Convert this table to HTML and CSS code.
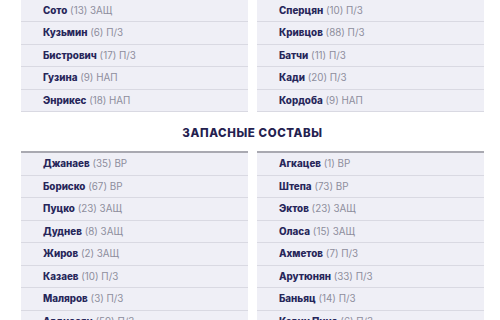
FILE: index.html
```html
<!DOCTYPE html>
<html lang="ru">
<head>
<meta charset="utf-8">
<link rel="stylesheet" href="styles.css">
</head>
<body>
<div class="page">
  <div class="lists lists-main">
    <ul class="list">
      <li class="row"><b class="name">Сото</b> <span class="meta">(13) ЗАЩ</span></li>
      <li class="row"><b class="name">Кузьмин</b> <span class="meta">(6) П/З</span></li>
      <li class="row"><b class="name">Бистрович</b> <span class="meta">(17) П/З</span></li>
      <li class="row"><b class="name">Гузина</b> <span class="meta">(9) НАП</span></li>
      <li class="row"><b class="name">Энрикес</b> <span class="meta">(18) НАП</span></li>
    </ul>
    <ul class="list">
      <li class="row"><b class="name">Сперцян</b> <span class="meta">(10) П/З</span></li>
      <li class="row"><b class="name">Кривцов</b> <span class="meta">(88) П/З</span></li>
      <li class="row"><b class="name">Батчи</b> <span class="meta">(11) П/З</span></li>
      <li class="row"><b class="name">Кади</b> <span class="meta">(20) П/З</span></li>
      <li class="row"><b class="name">Кордоба</b> <span class="meta">(9) НАП</span></li>
    </ul>
  </div>
  <h2 class="section-title">Запасные составы</h2>
  <div class="lists lists-subs">
    <ul class="list list-subs">
      <li class="row"><b class="name">Джанаев</b> <span class="meta">(35) ВР</span></li>
      <li class="row"><b class="name">Бориско</b> <span class="meta">(67) ВР</span></li>
      <li class="row"><b class="name">Пуцко</b> <span class="meta">(23) ЗАЩ</span></li>
      <li class="row"><b class="name">Дуднев</b> <span class="meta">(8) ЗАЩ</span></li>
      <li class="row"><b class="name">Жиров</b> <span class="meta">(2) ЗАЩ</span></li>
      <li class="row"><b class="name">Казаев</b> <span class="meta">(10) П/З</span></li>
      <li class="row"><b class="name">Маляров</b> <span class="meta">(3) П/З</span></li>
      <li class="row"><b class="name">Авдиасян</b> <span class="meta">(59) П/З</span></li>
    </ul>
    <ul class="list list-subs">
      <li class="row"><b class="name">Агкацев</b> <span class="meta">(1) ВР</span></li>
      <li class="row"><b class="name">Штепа</b> <span class="meta">(73) ВР</span></li>
      <li class="row"><b class="name">Эктов</b> <span class="meta">(23) ЗАЩ</span></li>
      <li class="row"><b class="name">Оласа</b> <span class="meta">(15) ЗАЩ</span></li>
      <li class="row"><b class="name">Ахметов</b> <span class="meta">(7) П/З</span></li>
      <li class="row"><b class="name">Арутюнян</b> <span class="meta">(33) П/З</span></li>
      <li class="row"><b class="name">Баньяц</b> <span class="meta">(14) П/З</span></li>
      <li class="row"><b class="name">Кевин Пина</b> <span class="meta">(6) П/З</span></li>
    </ul>
  </div>
</div>
</body>
</html>
```

FILE: styles.css
```css
html, body {
  margin: 0;
  padding: 0;
  background: #ffffff;
}
body {
  font-family: Inter, "Open Sans", "DejaVu Sans", sans-serif;
  overflow: hidden;
  height: 320px;
}
.page {
  padding: 0 16px 0 21px;
}
.lists {
  display: grid;
  grid-template-columns: 227px 227px;
  column-gap: 9px;
}
.list {
  list-style: none;
  margin: 0;
  padding: 0;
}
.list-subs {
  border-top: 2px solid #a9a9b1;
}
.row {
  box-sizing: border-box;
  height: 22.4px;
  line-height: 21.4px;
  padding-left: 22px;
  background: #efeff6;
  border-bottom: 1px solid #d9d9e2;
  font-size: 9.8px;
  white-space: nowrap;
}
.list-subs .row {
  height: 22.55px;
  line-height: 21.55px;
}
.name {
  font-weight: 800;
  color: #27265a;
}
.meta {
  font-weight: 400;
  color: #8d8d9c;
}
.section-title {
  margin: 0;
  height: 39px;
  padding-top: 3px;
  box-sizing: border-box;
  display: flex;
  align-items: center;
  justify-content: center;
  font-size: 11.5px;
  font-weight: 800;
  letter-spacing: 0.6px;
  text-transform: uppercase;
  color: #24214f;
}
```
